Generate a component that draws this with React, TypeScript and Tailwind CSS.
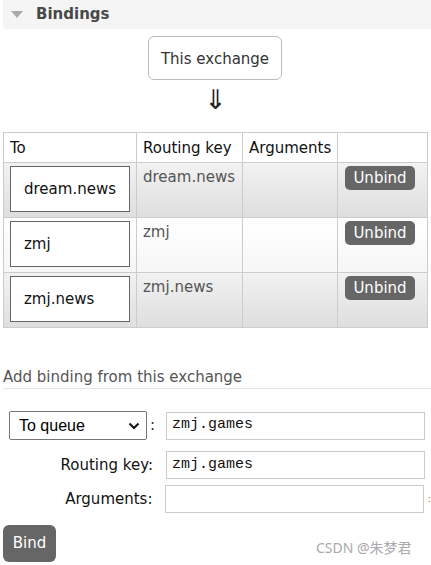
import React from "react";

const rows = [
  { to: "dream.news", key: "dream.news", alt: false },
  { to: "zmj", key: "zmj", alt: true },
  { to: "zmj.news", key: "zmj.news", alt: false },
];

export default function App() {
  return (
    <div className="w-[431px] h-[565px] bg-white overflow-hidden relative font-['DejaVu_Sans',Verdana,sans-serif] text-[15px] text-[#333]">
      {/* section header */}
      <div className="ml-[3px] h-[29px] bg-[#f5f5f5] flex items-center">
        <svg width="12" height="8" viewBox="0 0 12 8" className="ml-[8px]">
          <polygon points="0,0 12,0 6,7" fill="#aaa" />
        </svg>
        <span className="ml-[13px] font-bold text-[#484848] text-[15px]">Bindings</span>
      </div>

      {/* this exchange */}
      <div className="flex flex-col items-center pt-[7px]">
        <div className="w-[134px] h-[44px] border border-[#bbb] rounded-[6px] flex items-center justify-center text-[#333] ml-[-1px] pt-[2px]">
          This exchange
        </div>
        <div className="text-[27px] leading-[22px] mt-[9px] text-[#222] font-['DejaVu_Sans',sans-serif]">⇓</div>
      </div>

      {/* bindings table */}
      <table className="ml-[3px] mt-[21px] border-collapse w-[424px] table-fixed">
        <colgroup>
          <col className="w-[133px]" />
          <col className="w-[106px]" />
          <col className="w-[95px]" />
          <col className="w-[90px]" />
        </colgroup>
        <thead>
          <tr className="h-[30px] bg-white">
            <th className="border border-[#ccc] text-left font-normal px-[6px] pt-[2px] text-[#111]">To</th>
            <th className="border border-[#ccc] text-left font-normal px-[6px] pt-[2px] text-[#111]">Routing key</th>
            <th className="border border-[#ccc] text-left font-normal px-[6px] pt-[2px] text-[#111]">Arguments</th>
            <th className="border border-[#ccc]"></th>
          </tr>
        </thead>
        <tbody>
          {rows.map((r) => (
            <tr
              key={r.to}
              className={
                r.alt
                  ? "h-[54px] bg-gradient-to-b from-[#ffffff] to-[#f6f6f6]"
                  : "h-[55px] bg-gradient-to-b from-[#f2f2f2] to-[#dedede]"
              }
            >
              <td className="border border-[#ccc] align-top pl-[6px] pt-[3px] pb-[5px]">
                <div className="w-[120px] h-[46px] border border-[#666] bg-white flex items-center pl-[13px] text-[#111]">
                  {r.to}
                </div>
              </td>
              <td className="border border-[#ccc] align-top px-[6px] pt-[3px] text-[#555]">{r.key}</td>
              <td className="border border-[#ccc]"></td>
              <td className="border border-[#ccc] align-top pl-[7px] pt-[3px]">
                <button className="w-[70px] h-[24px] rounded-[5px] bg-[#666] text-white text-[15px] leading-[24px]">
                  Unbind
                </button>
              </td>
            </tr>
          ))}
        </tbody>
      </table>

      {/* add binding */}
      <div className="mt-[39px] ml-[3px] pb-[1px] border-b border-[#e4e4e4] text-[#555] leading-[20px]">
        Add binding from this exchange
      </div>

      <div className="mt-[22px] flex flex-col gap-[6px]">
        <div className="flex items-center">
          <div className="ml-[9px] w-[138px] h-[29px] border border-[#767676] rounded-[2px] flex items-center justify-between pl-[9px] pr-[6px] font-['Liberation_Sans',Arial,sans-serif] text-[16px] text-black">
            <span>To queue</span>
            <svg width="12" height="8" viewBox="0 0 12 8">
              <polyline points="1.5,1.5 6,6 10.5,1.5" fill="none" stroke="#111" strokeWidth="2" />
            </svg>
          </div>
          <span className="ml-[3px] w-[16px] text-[#333]">:</span>
          <div className="w-[259px] h-[28px] border border-[#ccc] flex items-center pl-[5px] font-['Liberation_Mono',monospace] text-[15px] text-[#111]">
            zmj.games
          </div>
        </div>
        <div className="flex items-center mt-[5px]">
          <span className="w-[154px] text-right pr-[1px] text-[#111]">Routing key:</span>
          <div className="ml-[12px] w-[259px] h-[28px] border border-[#ccc] flex items-center pl-[5px] font-['Liberation_Mono',monospace] text-[15px] text-[#111]">
            zmj.games
          </div>
        </div>
        <div className="flex items-center">
          <span className="w-[154px] text-right pr-[1px] text-[#111]">Arguments:</span>
          <div className="ml-[12px] w-[259px] h-[28px] border border-[#ccc]"></div>
          <span className="ml-[4px] text-[10px] text-[#e07020] leading-none">:</span>
        </div>
      </div>

      <div className="flex items-end mt-[12px]">
        <button className="ml-[3px] w-[53px] h-[37px] rounded-[6px] bg-[#666] text-white text-[15px]">Bind</button>
        <span className="ml-[260px] mb-[4px] text-[14px] text-[#aaa] font-['Noto_Sans','Noto_Sans_CJK_SC',sans-serif]">
          CSDN @朱梦君
        </span>
      </div>
    </div>
  );
}
